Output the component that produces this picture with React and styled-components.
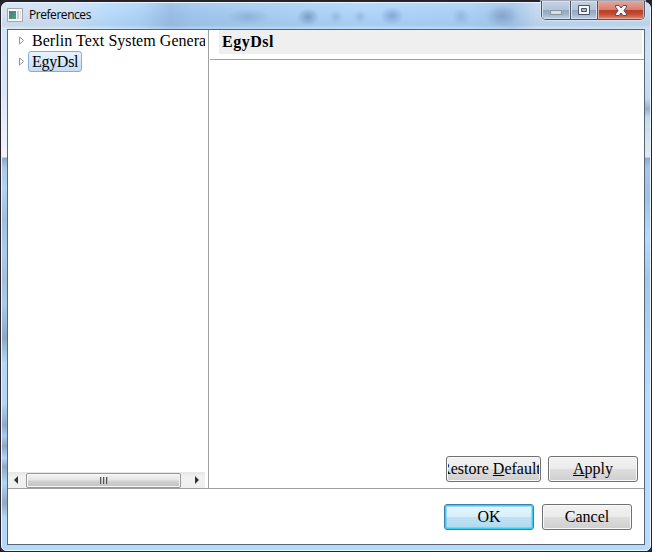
import React from "react";
import styled, { createGlobalStyle } from "styled-components";

const Global = createGlobalStyle`
  *{box-sizing:border-box}
  body{margin:0;background:#25222c;overflow:hidden}
  svg{flex:none}
`;
const serif = '"Liberation Serif", serif';

const Window = styled.div`
  width:652px;height:552px;padding:2px 1px 1px;display:flex;
  background:#25222c;
`;
const Glass = styled.div`
  flex:1;display:flex;flex-direction:column;
  border:1px solid #eaf6ff;border-radius:6px 6px 5px 5px;
  padding:0 5px 5px;
  background:
    linear-gradient(180deg,#d3e4f7 0,#d0e3fa 28px,#dae7fa 90px,#f1f5fb 154px,#8ea6c4 155px,#a9c8ea 165px,#b2d3f5 185px,#a2bfdf 216px,#a9cbee 250px,#a6c0dc 275px,#a9cbee 300px,#8fa8c4 335px,#b4d7f8 360px,#b3d5f6 400px,#8fa9c7 422px,#a9cbee 433px,#8fa7c2 443px,#b3d5f6 455px,#8fa7c2 464px,#b3d5f6 480px,#8fa7c2 500px,#b5d8fa 515px) 0 0/6px 100% no-repeat,
    linear-gradient(180deg,#bcd2ed 0,#cfe1f6 50px,#c4d9f1 95px,#98afcd 106px,#c9dae8 115px,#e3e9ee 154px,#93aac8 155px,#a9c6e6 165px,#a1c1e3 195px,#b9dbfb 235px,#a6c7e7 275px,#b9dcfc 390px,#b9dcfc 100%) 100% 0/6px 100% no-repeat,
    #b8dafa;
`;
const TitleBar = styled.header`
  height:26px;margin:0 -5px;display:flex;align-items:flex-start;padding-left:5px;
  border-radius:5px 5px 0 0;
  background:
    radial-gradient(ellipse 22px 8px at 246px 14px,#8fb1d8 0,#8fb1d800 100%),
    radial-gradient(ellipse 11px 9px at 306px 14px,#7c9cc6 0,#7c9cc600 100%),
    radial-gradient(ellipse 7px 7px at 334px 14px,#98b9de 0,#98b9de00 100%),
    radial-gradient(ellipse 7px 7px at 358px 14px,#98b9de 0,#98b9de00 100%),
    radial-gradient(ellipse 12px 9px at 390px 13px,#83a7d8 0,#83a7d800 100%),
    radial-gradient(ellipse 9px 9px at 459px 14px,#94b6dd 0,#94b6dd00 100%),
    radial-gradient(ellipse 16px 11px at 500px 13px,#84a4ca 0,#84a4ca00 100%),
    linear-gradient(180deg,#ffffff20,#ffffff00 40%,#7799bb22 85%,#ffffff40),
    linear-gradient(90deg,#d6e2ef 0,#cde0f4 70px,#b8dbfb 105px,#aed2f6 140px,#99bde4 168px,#9fc5eb 190px,#a3caee 230px,#afd4f9 360px,#a9cff5 470px,#a2c4e7 510px,#c3d8f0 535px,#c6daf0 100%);
`;
const AppIcon = styled.svg`display:block;margin-top:5px;`;
const Title = styled.div`
  font:12px/18px "Open Sans",sans-serif;letter-spacing:-.45px;color:#000;margin:3px auto 0 6px;
`;
const Controls = styled.div`
  display:flex;height:19px;margin:-2px 5px 0 0;border:1px solid #4e5664;border-top:0;
  border-radius:0 0 5px 5px;overflow:hidden;box-shadow:0 0 0 1px #e1edf9aa;
`;
const Control = styled.div`
  width:${p => p.$w}px;display:flex;align-items:center;justify-content:center;
  padding-top:${p => p.$drop || 0}px;
  border-left:${p => p.$first ? 0 : 1}px solid #4e5664;
  box-shadow:inset 0 0 0 1px ${p => p.$close ? "#eaa99e" : "#d4e1ef"};
  background:${p => p.$close
    ? "linear-gradient(#e2a89c 0,#d58072 48%,#b93c27 50%,#c24a31 72%,#e38a69 100%)"
    : "linear-gradient(#c3d2e3 0,#b4c5d9 48%,#91a7c0 50%,#9fb5cd 75%,#c0d4e9 100%)"};
`;
const Client = styled.main`
  flex:1;display:flex;flex-direction:column;border:1px solid #566577;background:#fff;
`;
const Split = styled.div`height:459px;display:flex;border-bottom:1px solid #a0a0a0;`;
const Sidebar = styled.aside`
  width:201px;border-right:1px solid #a0a0a0;display:flex;flex-direction:column;padding-right:3px;
`;
const Tree = styled.div`flex:1;overflow:hidden;`;
const TreeRow = styled.div`height:21px;display:flex;align-items:center;padding-left:10px;`;
const Label = styled.span`
  flex:none;height:21px;margin-left:3px;padding:0 3px;border:1px solid ${p => p.$selected ? "#84acdd" : "transparent"};
  border-radius:3px;background:${p => p.$selected ? "linear-gradient(#eaf3fd,#c5dcf8)" : "none"};
  font:16px/19px ${serif};letter-spacing:${p => p.$track}px;white-space:nowrap;color:#000;
`;
const ScrollBar = styled.div`
  height:16px;display:flex;align-items:center;background:linear-gradient(#e6e6e6,#f1f1f1 30%,#efefef);
`;
const ArrowBox = styled.div`flex:none;width:${p => p.$w}px;padding-left:${p => p.$inset}px;display:flex;`;
const Thumb = styled.div`
  flex:none;width:155px;height:15px;border:1px solid #979797;border-radius:2px;display:flex;align-items:center;justify-content:center;gap:1px;
  box-shadow:inset 0 0 0 1px #f8f8f8;
  background:linear-gradient(#f3f3f3 0,#e5e5e5 48%,#d2d2d2 52%,#c1c1c1 100%);
`;
const Grip = styled.i`width:2px;height:7px;background:linear-gradient(90deg,#555 50%,#bbb 50%);`;
const Page = styled.section`flex:1;display:flex;flex-direction:column;padding-left:1px;`;
const PageHeader = styled.div`height:30px;border-bottom:1px solid #a0a0a0;padding:0 2px 0 9px;`;
const PageTitle = styled.h1`
  margin:0;height:24px;padding-left:3px;background:#efefef;font:bold 16px/24px ${serif};letter-spacing:.5px;color:#000;
`;
const Actions = styled.div`display:flex;gap:${p => p.$gap}px;justify-content:flex-end;margin-top:${p => p.$top};padding:0 ${p => p.$right}px ${p => p.$bottom}px 0;`;
const Button = styled.button`
  width:${p => p.$w || 90}px;height:26px;padding:0;display:flex;align-items:center;justify-content:center;overflow:hidden;
  border:1px solid ${p => p.$primary ? "#3c7fb1" : "#707070"};border-radius:3px;
  box-shadow:inset 0 0 0 ${p => p.$primary ? "1.5px #39cdf5" : "1px #fafafa"};
  background:${p => p.$primary
    ? "linear-gradient(#e9f5fc 0,#d8eefb 48%,#bee2f5 52%,#b0d9ef 100%)"
    : "linear-gradient(#f2f2f2 0,#ebebeb 48%,#dddddd 52%,#cfcfcf 100%)"};
  font:16px/20px ${serif};letter-spacing:0;color:#000;
`;
const Caption = styled.span`
  display:flex;justify-content:center;width:calc(100% - 2px);overflow:hidden;white-space:pre;
  u{text-underline-offset:1px;text-decoration-thickness:1px}
`;

const Expander = () => <svg width="7" height="9"><path d="M1.5 1v7L5.7 4.500z" fill="#fff" stroke="#969696" /></svg>;
const Arrow = ({ flip }) => <svg width="4" height="8"><path d={flip ? "M0 0v8l4-4z" : "M4 0v8L0 4z"} fill="#333" /></svg>;

export default function App() {
  return (
    <>
      <Global />
      <Window>
        <Glass>
          <TitleBar>
            <AppIcon width="16" height="14" viewBox="0 0 16 14">
              <defs><linearGradient id="pane" x2="1" y2="1"><stop stopColor="#467b9b" /><stop offset="1" stopColor="#56a064" /></linearGradient></defs>
              <path d="M.5.5h15v13H.5z" fill="#f7f8f8" stroke="#a2a7ab" />
              <path d="M2 3h7v8H2z" fill="url(#pane)" /><path d="M10 3h2v8h-2z" fill="#bdd2d3" /><path d="M13 3h1v8h-1z" fill="#dedede" />
            </AppIcon>
            <Title>Preferences</Title>
            <Controls>
              <Control $w={28} $first $drop={4}><svg width="12" height="5"><path d="M.5.5h11v4H.5z" fill="#d8dfdf" stroke="#8793a0" /></svg></Control>
              <Control $w={27}><svg width="12" height="10"><path d="M.5.5h11v9H.5z" fill="#f8f8f8" stroke="#4b5368" /><path d="M3.500 3.500h5v3h-5z" fill="#a3b9d2" stroke="#4b5368" /></svg></Control>
              <Control $w={47} $close><svg width="12" height="11"><path d="M.5.5h3.500l2 2.500 2-2.500h3.500v1.500L9 5.500l2.500 3.500v1.500H8L6 8l-2 2.500H.5V9L3 5.500.5 2z" fill="#f8f8f8" stroke="#535063" /></svg></Control>
            </Controls>
          </TitleBar>
          <Client>
            <Split>
              <Sidebar>
                <Tree>
                  <TreeRow><Expander /><Label $track={0.04}>Berlin Text System Genera</Label></TreeRow>
                  <TreeRow><Expander /><Label $selected $track={-0.3}>EgyDsl</Label></TreeRow>
                </Tree>
                <ScrollBar><ArrowBox $w={18} $inset={6}><Arrow /></ArrowBox><Thumb><Grip /><Grip /><Grip /></Thumb><ArrowBox $w={24} $inset={14}><Arrow flip /></ArrowBox></ScrollBar>
              </Sidebar>
              <Page>
                <PageHeader><PageTitle>EgyDsl</PageTitle></PageHeader>
                <Actions $gap={7} $top="auto" $right={6} $bottom={6}>
                  <Button $w={95}><Caption><span>Restore <u>D</u>efaults</span></Caption></Button>
                  <Button><Caption><u>A</u>pply</Caption></Button>
                </Actions>
              </Page>
            </Split>
            <Actions $gap={8} $top="15px" $right={12} $bottom={0}>
              <Button $primary><Caption>OK</Caption></Button>
              <Button><Caption>Cancel</Caption></Button>
            </Actions>
          </Client>
        </Glass>
      </Window>
    </>
  );
}
